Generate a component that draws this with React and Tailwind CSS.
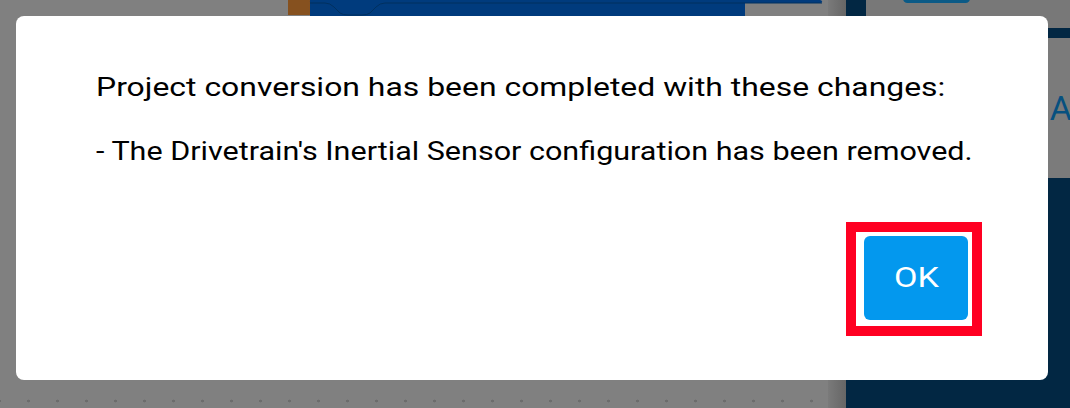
import React from 'react';

// Workspace behind the modal: block editor on the left, toolbox panel on the right.
// Everything here sits under the dimming overlay, so colours are already darkened.
const Backdrop = () => (
  <div className="absolute inset-0 flex">
    {/* block canvas */}
    <div className="relative w-[828px] h-full bg-[#808080]">
      <svg className="absolute left-0 top-0" width="828" height="20" viewBox="0 0 828 20">
        <rect x="288" y="0" width="24" height="15" fill="#86511f" />
        <rect x="310" y="0" width="512" height="3" rx="2" fill="#003b7d" />
        <rect x="310" y="0" width="435" height="16" fill="#003b7d" />
        <path
          d="M310 3 H325 Q330 3 334 7 L340 13 Q343 15 348 15 H362 Q367 15 370 13 L376 7 Q380 3 385 3 H822"
          stroke="#00305f"
          strokeWidth="1"
          fill="none"
        />
      </svg>
      <div className="absolute left-0 right-0 top-[398px] h-[6px] bg-[radial-gradient(circle,#6c6c6c_1.3px,transparent_1.6px)] bg-size-[29px_6px] bg-position-[14px_0]" />
    </div>
    {/* scrollbar shadow */}
    <div className="w-[18px] h-full bg-gradient-to-r from-[#7a7a7a] to-[#666666]" />
    {/* toolbox panel */}
    <div className="flex-1 h-full bg-[#022743] flex">
      <div className="w-[20px]" />
      <div className="flex-1 flex flex-col">
        <div className="h-[28px] bg-[#787878] relative">
          <div className="absolute left-[37px] top-[-6px] w-[67px] h-[9px] rounded-full bg-[#0b5a86]" />
        </div>
        <div className="h-[10px]" />
        <div className="h-[140px] bg-[#7b7b7b] flex items-center justify-end">
          <span className="font-['Roboto',sans-serif] text-[34px] text-[#07507f] mr-[-2px]">A</span>
        </div>
      </div>
    </div>
  </div>
);

function App() {
  return (
    <div className="relative w-[1070px] h-[408px] overflow-hidden bg-[#808080] font-['Roboto',sans-serif]">
      <Backdrop />
      <div className="absolute inset-0 p-4">
        <div className="w-[1032px] h-[364px] bg-white rounded-lg flex flex-col text-black">
          <div className="pl-20 pt-[55px] text-[26px] leading-[32px]">
            <p className="origin-left scale-x-[1.227] whitespace-nowrap">
              Project conversion has been completed with these changes:
            </p>
            <p className="mt-8 origin-left scale-x-[1.174] whitespace-nowrap">
              - The Drivetrain's Inertial Sensor configuration has been removed.
            </p>
          </div>
          <div className="flex justify-end pr-[66px] mt-[55px]">
            <div className="border-[10px] border-[#ff0022] pl-2 pr-1 pt-1 pb-1.5">
              <button className="w-[104px] h-[84px] rounded-md bg-[#0398ee] text-white text-[28px] flex items-center justify-center">
                <span className="scale-x-[1.22]">OK</span>
              </button>
            </div>
          </div>
        </div>
      </div>
    </div>
  );
}

export default App;
